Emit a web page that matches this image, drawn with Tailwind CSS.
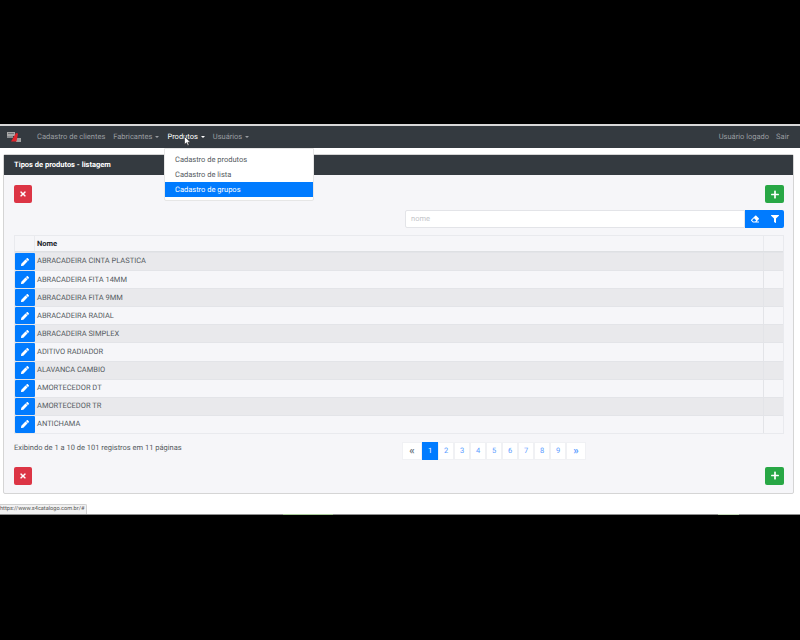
<!DOCTYPE html>
<html lang="pt-BR">
<head>
  <meta charset="UTF-8">
  <title>Tipos de produtos</title>
  <script src="https://cdn.jsdelivr.net/npm/@tailwindcss/browser@4"></script>
</head>
<body class="bg-black font-['Roboto',sans-serif] [text-rendering:geometricPrecision] text-[7.5px] text-[#555b61] w-[800px] h-[640px] overflow-hidden flex flex-col">
  <div class="h-[124px] shrink-0"></div>

  <div class="relative h-[391px] shrink-0 bg-white border-t-2 border-[#d8d8d8]">
    <!-- Navbar -->
    <nav class="h-[22px] bg-[#343a40] flex items-center pl-[7px] pr-[11px] text-[#9a9da1]">
      <svg class="w-[14px] h-[12px] mr-[16px]" viewBox="0 0 14 12">
        <rect x="0" y="1" width="8" height="4" fill="#a8a8a8"/>
        <rect x="1" y="2" width="6" height="1" fill="#6f7276"/>
        <rect x="0" y="5" width="6" height="2" fill="#8a8c90"/>
        <rect x="9" y="7" width="5" height="4" fill="#a0a0a0"/>
        <path d="M4 10.500l5-8.500 2 .5-1.500 8z" fill="#e0242b"/>
      </svg>
      <a class="mr-[8px]">Cadastro de clientes</a>
      <a class="mr-[8px] flex items-center">Fabricantes<span class="ml-[3px] border-x-[2.5px] border-t-[2.5px] border-x-transparent border-t-[#9a9da1]"></span></a>
      <a class="mr-[8px] flex items-center text-white">Produtos<span class="ml-[3px] border-x-[2.5px] border-t-[2.5px] border-x-transparent border-t-white"></span></a>
      <a class="flex items-center">Usuários<span class="ml-[3px] border-x-[2.5px] border-t-[2.5px] border-x-transparent border-t-[#9a9da1]"></span></a>
      <a class="ml-auto mr-[7px]">Usuário logado</a>
      <a>Sair</a>
    </nav>

    <!-- Card -->
    <section class="ml-[3px] mt-[6px] w-[791px] h-[340px] border border-[#d5d5d5] rounded-[2px] bg-[#f6f6f9] flex flex-col">
      <header class="h-[20px] shrink-0 bg-[#343a40] text-white font-bold flex items-center pl-[10px]">Tipos de produtos - listagem</header>
      <div class="flex-1 pl-[10px] pr-[9px] pt-[10px] flex flex-col">
        <div class="flex justify-between">
          <button class="w-[18px] h-[18px] rounded-[2px] bg-[#dc3545] flex items-center justify-center">
            <svg class="w-[6px] h-[8px]" viewBox="0 0 352 512" fill="#fff"><path d="M242.72 256l100.07-100.07c12.28-12.28 12.28-32.19 0-44.48l-22.24-22.24c-12.28-12.28-32.19-12.28-44.48 0L176 189.28 75.93 89.21c-12.28-12.28-32.19-12.28-44.48 0L9.21 111.45c-12.28 12.28-12.28 32.19 0 44.48L109.28 256 9.21 356.07c-12.28 12.28-12.28 32.19 0 44.48l22.24 22.24c12.28 12.28 32.2 12.28 44.48 0L176 322.72l100.07 100.07c12.28 12.28 32.2 12.28 44.48 0l22.24-22.24c12.28-12.28 12.28-32.19 0-44.48L242.72 256z"/></svg>
          </button>
          <button class="w-[19px] h-[18px] rounded-[2px] bg-[#28a745] flex items-center justify-center">
            <svg class="w-[8px] h-[9px]" viewBox="0 0 448 512" fill="#fff"><path d="M416 208H272V64c0-17.67-14.33-32-32-32h-32c-17.67 0-32 14.33-32 32v144H32c-17.67 0-32 14.33-32 32v32c0 17.67 14.33 32 32 32h144v144c0 17.67 14.33 32 32 32h32c17.67 0 32-14.33 32-32V304h144c17.67 0 32-14.33 32-32v-32c0-17.67-14.33-32-32-32z"/></svg>
          </button>
        </div>

        <!-- Filtro -->
        <div class="flex justify-end mt-[7px]">
          <div class="w-[340px] h-[18px] bg-white border border-[#e3e4e8] rounded-l-[2px] pl-[5px] flex items-center text-[#c4c6ca]">nome</div>
          <button class="w-[20px] h-[18px] bg-[#007bff] flex items-center justify-center">
            <svg class="w-[8px] h-[8px]" viewBox="0 0 512 512" fill="#fff"><path d="M497.941 273.941c18.745-18.745 18.745-49.137 0-67.882l-160-160c-18.745-18.745-49.136-18.746-67.883 0l-256 256c-18.745 18.745-18.745 49.137 0 67.882l96 96A48.004 48.004 0 0 0 144 480h356c6.627 0 12-5.373 12-12v-40c0-6.627-5.373-12-12-12H355.883l142.058-142.059zm-302.627-62.627l137.373 137.373L265.373 416H150.628l-80-80 124.686-124.686z"/></svg>
          </button>
          <button class="w-[19px] h-[18px] bg-[#007bff] rounded-r-[2px] flex items-center justify-center">
            <svg class="w-[8px] h-[8px]" viewBox="0 0 512 512" fill="#fff"><path d="M487.976 0H24.028C2.71 0-8.047 25.866 7.058 40.971L192 225.941V432c0 7.831 3.821 15.17 10.237 19.662l80 55.98C298.02 518.69 320 507.493 320 487.98V225.941l184.947-184.97C520.021 25.896 509.338 0 487.976 0z"/></svg>
          </button>
        </div>

        <!-- Tabela -->
        <div class="mt-[7px] border border-[#e9eaee]">
          <div class="h-[16px] flex border-b border-[#dee0e3] font-bold text-[#212529]">
            <div class="w-[20px] border-r border-[#e9eaee]"></div>
            <div class="flex-1 pl-[2px] flex items-center">Nome</div>
            <div class="w-[20px] border-l border-[#e9eaee]"></div>
          </div>
          <div id="linhas"></div>
        </div>

        <!-- Rodape da tabela -->
        <div class="relative mt-[8px] h-[18px] flex items-start">
          <span class="leading-[10px] mt-[1px]">Exibindo de 1 a 10 de 101 registros em 11 páginas</span>
          <div id="paginas" class="absolute left-[388px] top-0 flex h-[18px] text-[#5b9dff]"></div>
        </div>

        <div class="flex justify-between mt-[7px]">
          <button class="w-[18px] h-[18px] rounded-[2px] bg-[#dc3545] flex items-center justify-center">
            <svg class="w-[6px] h-[8px]" viewBox="0 0 352 512" fill="#fff"><path d="M242.72 256l100.07-100.07c12.28-12.28 12.28-32.19 0-44.48l-22.24-22.24c-12.28-12.28-32.19-12.28-44.48 0L176 189.28 75.93 89.21c-12.28-12.28-32.19-12.28-44.48 0L9.21 111.45c-12.28 12.28-12.28 32.19 0 44.48L109.28 256 9.21 356.07c-12.28 12.28-12.28 32.19 0 44.48l22.24 22.24c12.28 12.28 32.2 12.28 44.48 0L176 322.72l100.07 100.07c12.28 12.28 32.2 12.28 44.48 0l22.24-22.24c12.28-12.28 12.28-32.19 0-44.48L242.72 256z"/></svg>
          </button>
          <button class="w-[19px] h-[18px] rounded-[2px] bg-[#28a745] flex items-center justify-center">
            <svg class="w-[8px] h-[9px]" viewBox="0 0 448 512" fill="#fff"><path d="M416 208H272V64c0-17.67-14.33-32-32-32h-32c-17.67 0-32 14.33-32 32v144H32c-17.67 0-32 14.33-32 32v32c0 17.67 14.33 32 32 32h144v144c0 17.67 14.33 32 32 32h32c17.67 0 32-14.33 32-32V304h144c17.67 0 32-14.33 32-32v-32c0-17.67-14.33-32-32-32z"/></svg>
          </button>
        </div>
      </div>
    </section>

    <!-- Menu Produtos -->
    <div class="absolute left-[164px] top-[22px] w-[150px] h-[53px] bg-white border border-[#e6e6e6] rounded-b-[2px] pt-[3px] text-[#555b61]">
      <div class="h-[15px] pl-[10px] flex items-center">Cadastro de produtos</div>
      <div class="h-[15px] pl-[10px] flex items-center">Cadastro de lista</div>
      <div class="h-[15px] pl-[10px] flex items-center bg-[#007bff] text-white">Cadastro de grupos</div>
    </div>

    <!-- Cursor -->
    <svg class="absolute left-[184px] top-[10px] w-[7px] h-[10px]" viewBox="0 0 7 10">
      <path d="M0.5 0.5v8l2-1.8 1.2 2.8 1.4-.6-1.2-2.7h2.6z" fill="#fff" stroke="#222" stroke-width="0.6"/>
    </svg>

    <!-- Barra de status -->
    <div class="absolute left-0 bottom-[1px] h-[10px] w-[87px] bg-[#f2f2f2] border-t border-r border-[#d0d0d0] rounded-tr-[2px] text-[5.6px] text-[#555] flex items-center whitespace-nowrap">https://www.s4catalogo.com.br/#</div>

    <!-- Linha inferior da janela -->
    <div class="absolute inset-x-0 bottom-0 h-[1px] bg-[#8f8f8f]"></div>
    <div class="absolute left-[283px] bottom-0 h-[1px] w-[50px] bg-[#a9c99a]"></div>
    <div class="absolute left-[718px] bottom-0 h-[1px] w-[21px] bg-[#c5d8bb]"></div>
  </div>

  <script>
    // Linhas da tabela
    const nomes = ['ABRACADEIRA CINTA PLASTICA', 'ABRACADEIRA FITA 14MM', 'ABRACADEIRA FITA 9MM', 'ABRACADEIRA RADIAL', 'ABRACADEIRA SIMPLEX', 'ADITIVO RADIADOR', 'ALAVANCA CAMBIO', 'AMORTECEDOR DT', 'AMORTECEDOR TR', 'ANTICHAMA'];
    document.getElementById('linhas').innerHTML = nomes.map((nome, i) => `
      <div class="h-[18.1px] flex ${i % 2 === 0 ? 'bg-[#e9e9ec]' : 'bg-[#f6f6f9]'} border-t border-[#e3e4e8]">
        <button class="w-[20px] bg-[#007bff] rounded-[1px] flex items-center justify-center">
          <svg class="w-[8px] h-[8px]" viewBox="0 0 512 512" fill="#fff"><path d="M497.9 142.1l-46.1 46.1c-4.7 4.7-12.3 4.7-17 0l-111-111c-4.7-4.7-4.7-12.3 0-17l46.1-46.1c18.7-18.7 49.1-18.7 67.9 0l60.1 60.1c18.8 18.7 18.8 49.1 0 67.9zM284.2 99.8L21.6 362.4.4 483.9c-2.9 16.4 11.4 30.6 27.8 27.8l121.5-21.3 262.6-262.6c4.7-4.7 4.7-12.3 0-17l-111-111c-4.8-4.7-12.4-4.7-17.1 0z"/></svg>
        </button>
        <div class="flex-1 pl-[2px] pb-[1px] flex items-center">${nome}</div>
        <div class="w-[20px] border-l border-[#e3e4e8]"></div>
      </div>`).join('');

    // Paginacao
    const paginas = ['«', '1', '2', '3', '4', '5', '6', '7', '8', '9', '»'];
    document.getElementById('paginas').innerHTML = paginas.map((p, i) => {
      const largura = (i === 0 || i === 10) ? 'w-[20px] text-[11px] font-bold' : 'w-[16px]';
      const cor = p === '1' ? 'bg-[#007bff] text-white' : (p === '«' ? 'bg-white text-[#6c757d] border border-[#f0f1f4]' : 'bg-white border border-[#f0f1f4]');
      return `<span class="${largura} ${cor} flex items-center justify-center">${p}</span>`;
    }).join('');
  </script>
</body>
</html>
